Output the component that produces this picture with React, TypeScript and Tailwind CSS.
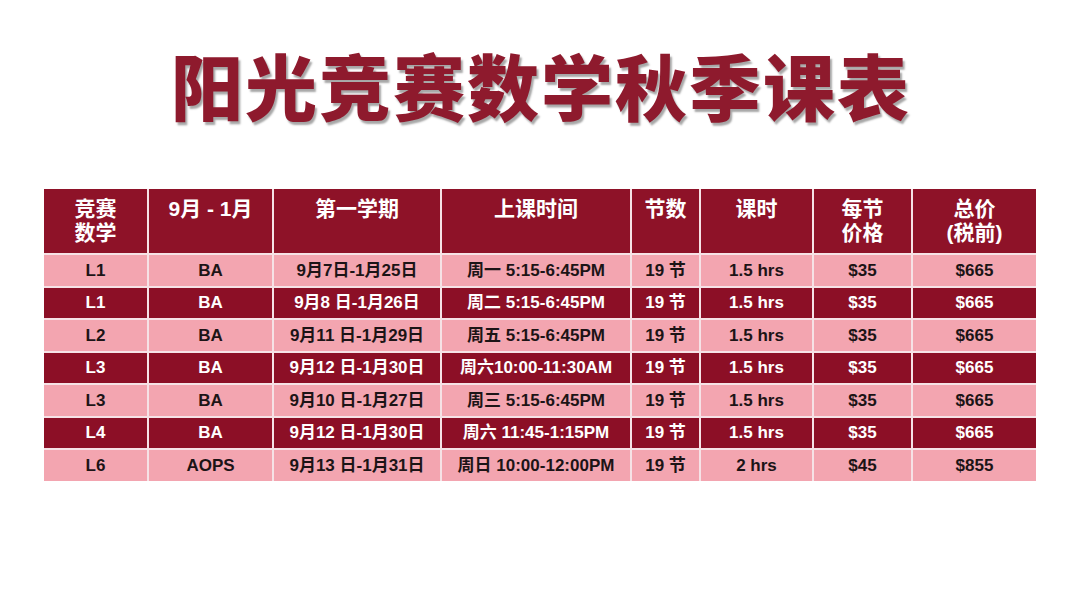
const HEAD = [
  ['竞赛', '数学'],
  ['9月 - 1月'],
  ['第一学期'],
  ['上课时间'],
  ['节数'],
  ['课时'],
  ['每节', '价格'],
  ['总价', '(税前)'],
]

const ROWS = [
  ['L1', 'BA', '9月7日-1月25日', '周一 5:15-6:45PM', '19 节', '1.5 hrs', '$35', '$665'],
  ['L1', 'BA', '9月8 日-1月26日', '周二 5:15-6:45PM', '19 节', '1.5 hrs', '$35', '$665'],
  ['L2', 'BA', '9月11 日-1月29日', '周五 5:15-6:45PM', '19 节', '1.5 hrs', '$35', '$665'],
  ['L3', 'BA', '9月12 日-1月30日', '周六10:00-11:30AM', '19 节', '1.5 hrs', '$35', '$665'],
  ['L3', 'BA', '9月10 日-1月27日', '周三 5:15-6:45PM', '19 节', '1.5 hrs', '$35', '$665'],
  ['L4', 'BA', '9月12 日-1月30日', '周六 11:45-1:15PM', '19 节', '1.5 hrs', '$35', '$665'],
  ['L6', 'AOPS', '9月13 日-1月31日', '周日 10:00-12:00PM', '19 节', '2 hrs', '$45', '$855'],
]

export default function App() {
  return (
    <div className="w-[1080px] h-[608px] bg-white flex flex-col items-center pt-[42px] font-['Liberation_Sans','Noto_Sans_CJK_SC',sans-serif]">
      <h1 className="h-[84px] leading-[84px] text-[72px] font-black tracking-[2px] pl-[2px] text-[#8e1a2d] font-['Noto_Sans_CJK_SC',sans-serif] [text-shadow:2px_3px_2px_rgba(0,0,0,0.35)]">
        阳光竞赛数学秋季课表
      </h1>

      <div className="mt-[63px] w-[992px] grid grid-cols-[103px_123px_166px_188px_67px_111px_97px_123px] gap-x-[2px] gap-y-[2px] bg-[#f6e2e6]">
        {HEAD.map((lines, i) => (
          <div key={i} className="h-[64px] bg-[#8e1228] text-white text-[21px] leading-[24px] font-bold text-center pt-[8px]">
            {lines.map(l => <div key={l}>{l}</div>)}
          </div>
        ))}
        {ROWS.map((row, r) =>
          row.map((cell, c) => (
            <div key={r + '-' + c}
              className={`h-[30.5px] flex items-center justify-center text-[17px] font-bold whitespace-nowrap ${r % 2 === 0 ? 'bg-[#f3a5b0] text-[#1c1416]' : 'bg-[#8c0f26] text-white'}`}>
              {cell}
            </div>
          ))
        )}
      </div>
    </div>
  )
}
